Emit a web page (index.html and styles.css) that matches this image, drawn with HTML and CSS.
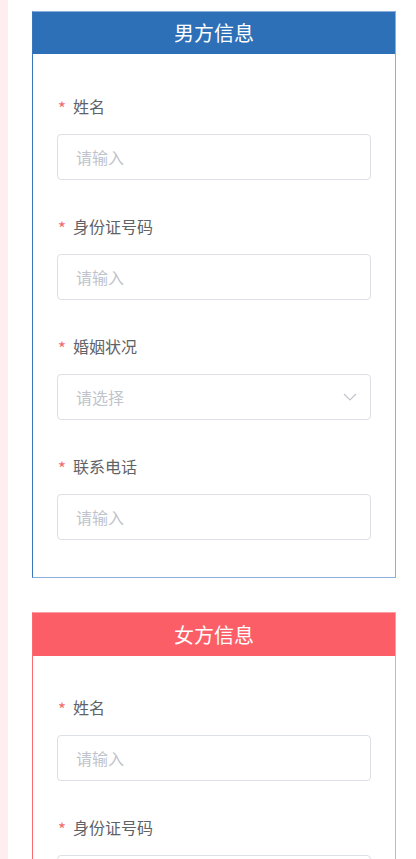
FILE: index.html
```html
<!DOCTYPE html>
<html lang="zh">
<head>
<meta charset="utf-8">
<title>信息登记</title>
<link rel="stylesheet" href="styles.css">
</head>
<body>
<div class="page">
  <div class="strip"></div>
  <main class="main">
    <section class="card card-male">
      <div class="card-head">男方信息</div>
      <div class="card-body">
        <div class="field">
          <div class="label"><span class="req">*</span>姓名</div>
          <div class="input"><span class="ph">请输入</span></div>
        </div>
        <div class="field">
          <div class="label"><span class="req">*</span>身份证号码</div>
          <div class="input"><span class="ph">请输入</span></div>
        </div>
        <div class="field">
          <div class="label"><span class="req">*</span>婚姻状况</div>
          <div class="input select"><span class="ph">请选择</span>
            <svg class="chev" width="14" height="8" viewBox="0 0 14 8"><path d="M1 1 L7 7 L13 1" fill="none" stroke="#c0c4cc" stroke-width="1.2"/></svg>
          </div>
        </div>
        <div class="field">
          <div class="label"><span class="req">*</span>联系电话</div>
          <div class="input"><span class="ph">请输入</span></div>
        </div>
      </div>
    </section>
    <section class="card card-female">
      <div class="card-head">女方信息</div>
      <div class="card-body">
        <div class="field">
          <div class="label"><span class="req">*</span>姓名</div>
          <div class="input"><span class="ph">请输入</span></div>
        </div>
        <div class="field">
          <div class="label"><span class="req">*</span>身份证号码</div>
          <div class="input"><span class="ph">请输入</span></div>
        </div>
      </div>
    </section>
  </main>
</div>
</body>
</html>
```

FILE: styles.css
```css
html, body {
  margin: 0;
  padding: 0;
  background: #ffffff;
  font-family: "Noto Sans CJK SC", "Noto Sans", sans-serif;
}
.page {
  display: flex;
  height: 859px;
  overflow: hidden;
}
.strip {
  width: 8px;
  flex: none;
  background: #ffeef0;
}
.main {
  flex: 1;
  padding: 11px 20px 0 24px;
}
.card {
  border: 1px solid #8aafdc;
  border-left-color: #3a76ba;
  margin-bottom: 34px;
}
.card-female {
  border-color: #fda0a5;
  border-left-color: #fc6a72;
}
.card-head {
  height: 42px;
  line-height: 42px;
  text-align: center;
  color: #ffffff;
  font-size: 20px;
  background: #2d70b7;
}
.card-female .card-head {
  background: #fc5e68;
  height: 43px;
  line-height: 43px;
}
.card-body {
  padding: 41px 24px 37px 24px;
  display: flex;
  flex-direction: column;
  gap: 35px;
}
.card-female .card-body {
  padding-top: 40px;
}
.field {
  display: flex;
  flex-direction: column;
  gap: 17px;
}
.label {
  height: 22px;
  line-height: 22px;
  font-size: 16px;
  color: #606266;
  display: flex;
  align-items: center;
}
.req {
  color: #f56c6c;
  font-size: 17px;
  width: 15px;
  margin-left: 1px;
  position: relative;
  top: 2px;
}
.input {
  height: 44px;
  border: 1px solid #dcdfe6;
  border-radius: 4px;
  display: flex;
  align-items: center;
  padding: 0 19px 0 18px;
}
.ph {
  font-size: 16px;
  color: #c0c4cc;
  flex: 1;
}
.chev {
  flex: none;
  margin-right: -6px;
}
```
